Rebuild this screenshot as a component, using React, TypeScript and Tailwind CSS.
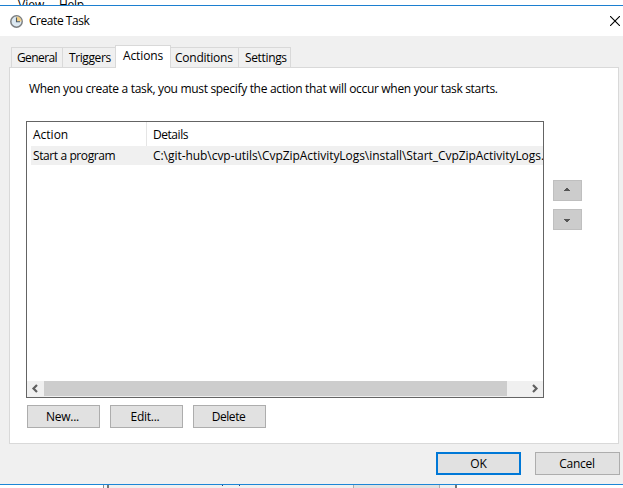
import type { ReactNode } from 'react';

type TabProps = { label: string; className: string; text: string };

function Tab({ label, className, text }: TabProps) {
  return (
    <div className={`h-[20px] border-t border-r border-[#d9d9d9] bg-[#f0f0f0] ${className}`}>
      <span className={`block leading-[20px] ${text}`}>{label}</span>
    </div>
  );
}

function Button({ children, className }: { children: ReactNode; className: string }) {
  return (
    <button className={`flex h-[23px] items-center justify-center bg-[#e1e1e1] leading-[16px] ${className}`}>
      {children}
    </button>
  );
}

function ClockIcon() {
  return (
    <svg width="13" height="13" viewBox="0 0 13 13">
      <circle cx="6.5" cy="6.5" r="5.7" fill="#dce8f1" stroke="#7b7e80" strokeWidth="1.5" />
      <path d="M6.5 6.5V1.5A5 5 0 0 1 11.5 6.5Z" fill="#f3cf86" />
      <path d="M6.5 2.5V6.7H10" fill="none" stroke="#4c5a66" strokeWidth="1.1" />
    </svg>
  );
}

export default function App() {
  return (
    <div className="flex h-[488px] w-[623px] flex-col overflow-hidden bg-white font-['Open_Sans','Noto_Sans',sans-serif] text-[12px] text-black">
      <div className="flex h-[5px] shrink-0 overflow-hidden leading-[16px]">
        <span className="-mt-[3px] ml-[18px] w-[41px]">View</span>
        <span className="-mt-[3px] tracking-[-0.3px]">Help</span>
      </div>
      <div className="h-px shrink-0 bg-[#1c7fd0]" />

      <div className="flex h-[30px] shrink-0 items-center pr-[3px] pl-[10px]">
        <ClockIcon />
        <span className="ml-[6px] leading-[16px] tracking-[-0.45px]">Create Task</span>
        <svg className="ml-auto" width="10" height="10" viewBox="0 0 10 10">
          <path d="M0 0L10 10M10 0L0 10" stroke="#000" strokeWidth="1.1" />
        </svg>
      </div>

      <div className="flex h-[448px] shrink-0 flex-col bg-[#f0f0f0] pt-[9px] pl-[9px]">
        <div className="flex h-[22px] items-end pl-[2px]">
          <Tab label="General" className="w-[52px] border-l" text="pl-[5px] tracking-[-0.6px]" />
          <Tab label="Triggers" className="w-[52px] border-r-0" text="pl-[6px] tracking-[-0.4px]" />
          <div className="z-10 -mb-px h-[23px] w-[56px] border border-b-0 border-[#d9d9d9] bg-white">
            <span className="block pl-[7px] leading-[20px] tracking-[-0.12px]">Actions</span>
          </div>
          <Tab label="Conditions" className="w-[68px]" text="pl-[4px] tracking-[-0.25px]" />
          <Tab label="Settings" className="w-[52px]" text="pl-[6px] tracking-[-0.35px]" />
        </div>

        <div className="h-[377px] w-[610px] border border-[#d9d9d9] bg-white pl-[16px]">
          <p className="h-[53px] pt-[13px] pl-[3px] leading-[16px] tracking-[-0.315px] whitespace-nowrap">
            When you create a task, you must specify the action that will occur when your task starts.
          </p>
          <div className="flex">
            <div className="flex h-[277px] w-[518px] flex-col border border-[#646464]">
              <div className="flex h-[24px] leading-[25px]">
                <span className="w-[120px] border-r border-[#e5e5e5] pl-[6px]">Action</span>
                <span className="pl-[6px] tracking-[-0.45px]">Details</span>
              </div>
              <div className="ml-[4px] flex h-[19px] overflow-hidden bg-[#f0f0f0] leading-[20px] whitespace-nowrap">
                <span className="w-[122px] shrink-0 pl-[2px] tracking-[-0.4px]">Start a program</span>
                <span className="tracking-[-0.05px]">C:\git-hub\cvp-utils\CvpZipActivityLogs\install\Start_CvpZipActivityLogs.</span>
              </div>
              <div className="mt-auto flex h-[16px] items-start bg-[#f0f0f0]">
                <svg width="17" height="15" viewBox="0 0 17 15">
                  <path d="M10 4L6.5 7.5L10 11" fill="none" stroke="#606060" strokeWidth="2.2" />
                </svg>
                <div className="h-[15px] w-[463px] bg-[#cdcdcd]" />
                <svg className="ml-auto" width="17" height="15" viewBox="0 0 17 15">
                  <path d="M7 4L10.5 7.5L7 11" fill="none" stroke="#606060" strokeWidth="2.2" />
                </svg>
              </div>
            </div>
            <div className="ml-[9px] flex flex-col gap-[8px] pt-[59px]">
              <div className="h-[21px] w-[29px] border border-[#bfbfbf] bg-[#cccccc]">
                <svg width="27" height="19" viewBox="0 0 27 19" shapeRendering="crispEdges">
                  <path d="M12 7h2v1h1v1h1v1h-6v-1h1v-1h1z" fill="#555" />
                </svg>
              </div>
              <div className="h-[21px] w-[29px] border border-[#bfbfbf] bg-[#cccccc]">
                <svg width="27" height="19" viewBox="0 0 27 19" shapeRendering="crispEdges">
                  <path d="M10 9h6v1h-1v1h-1v1h-2v-1h-1v-1h-1z" fill="#555" />
                </svg>
              </div>
            </div>
          </div>
          <div className="mt-[7px] flex gap-[10px] pl-px">
            <Button className="w-[73px] border border-[#adadad] pt-px pr-[2px] tracking-[-0.25px]">New...</Button>
            <Button className="w-[73px] border border-[#adadad] pt-px pr-[3px] tracking-[-0.25px]">Edit...</Button>
            <Button className="w-[73px] border border-[#adadad] pt-px pr-[2px] tracking-[-0.45px]">Delete</Button>
          </div>
        </div>

        <div className="mt-[8px] flex justify-end gap-[14px] pr-[3px]">
          <Button className="w-[85px] border-2 border-[#0078d7] pt-px">OK</Button>
          <Button className="w-[85px] border border-[#adadad] pt-px pr-px tracking-[-0.25px]">Cancel</Button>
        </div>
      </div>

      <div className="h-px shrink-0 bg-[#1c86d6]" />
      <div className="flex h-[3px] shrink-0">
        <div className="w-[104px] border-r border-[#8c8c8c] bg-white" />
        <div className="w-[5px] border-r-2 border-[#767676] bg-[#f5f5f5]" />
        <div className="flex w-[244px] bg-[#f0f0f0]">
          <div className="ml-[113px] h-px w-px bg-[#26457c]" />
          <div className="ml-[16px] h-px w-px bg-[#26457c]" />
        </div>
        <div className="w-[87px] border-x border-[#adadad] bg-[#e1e1e1]" />
        <div className="w-[17px] border-r-2 border-[#767676] bg-[#f0f0f0]" />
      </div>
    </div>
  );
}
